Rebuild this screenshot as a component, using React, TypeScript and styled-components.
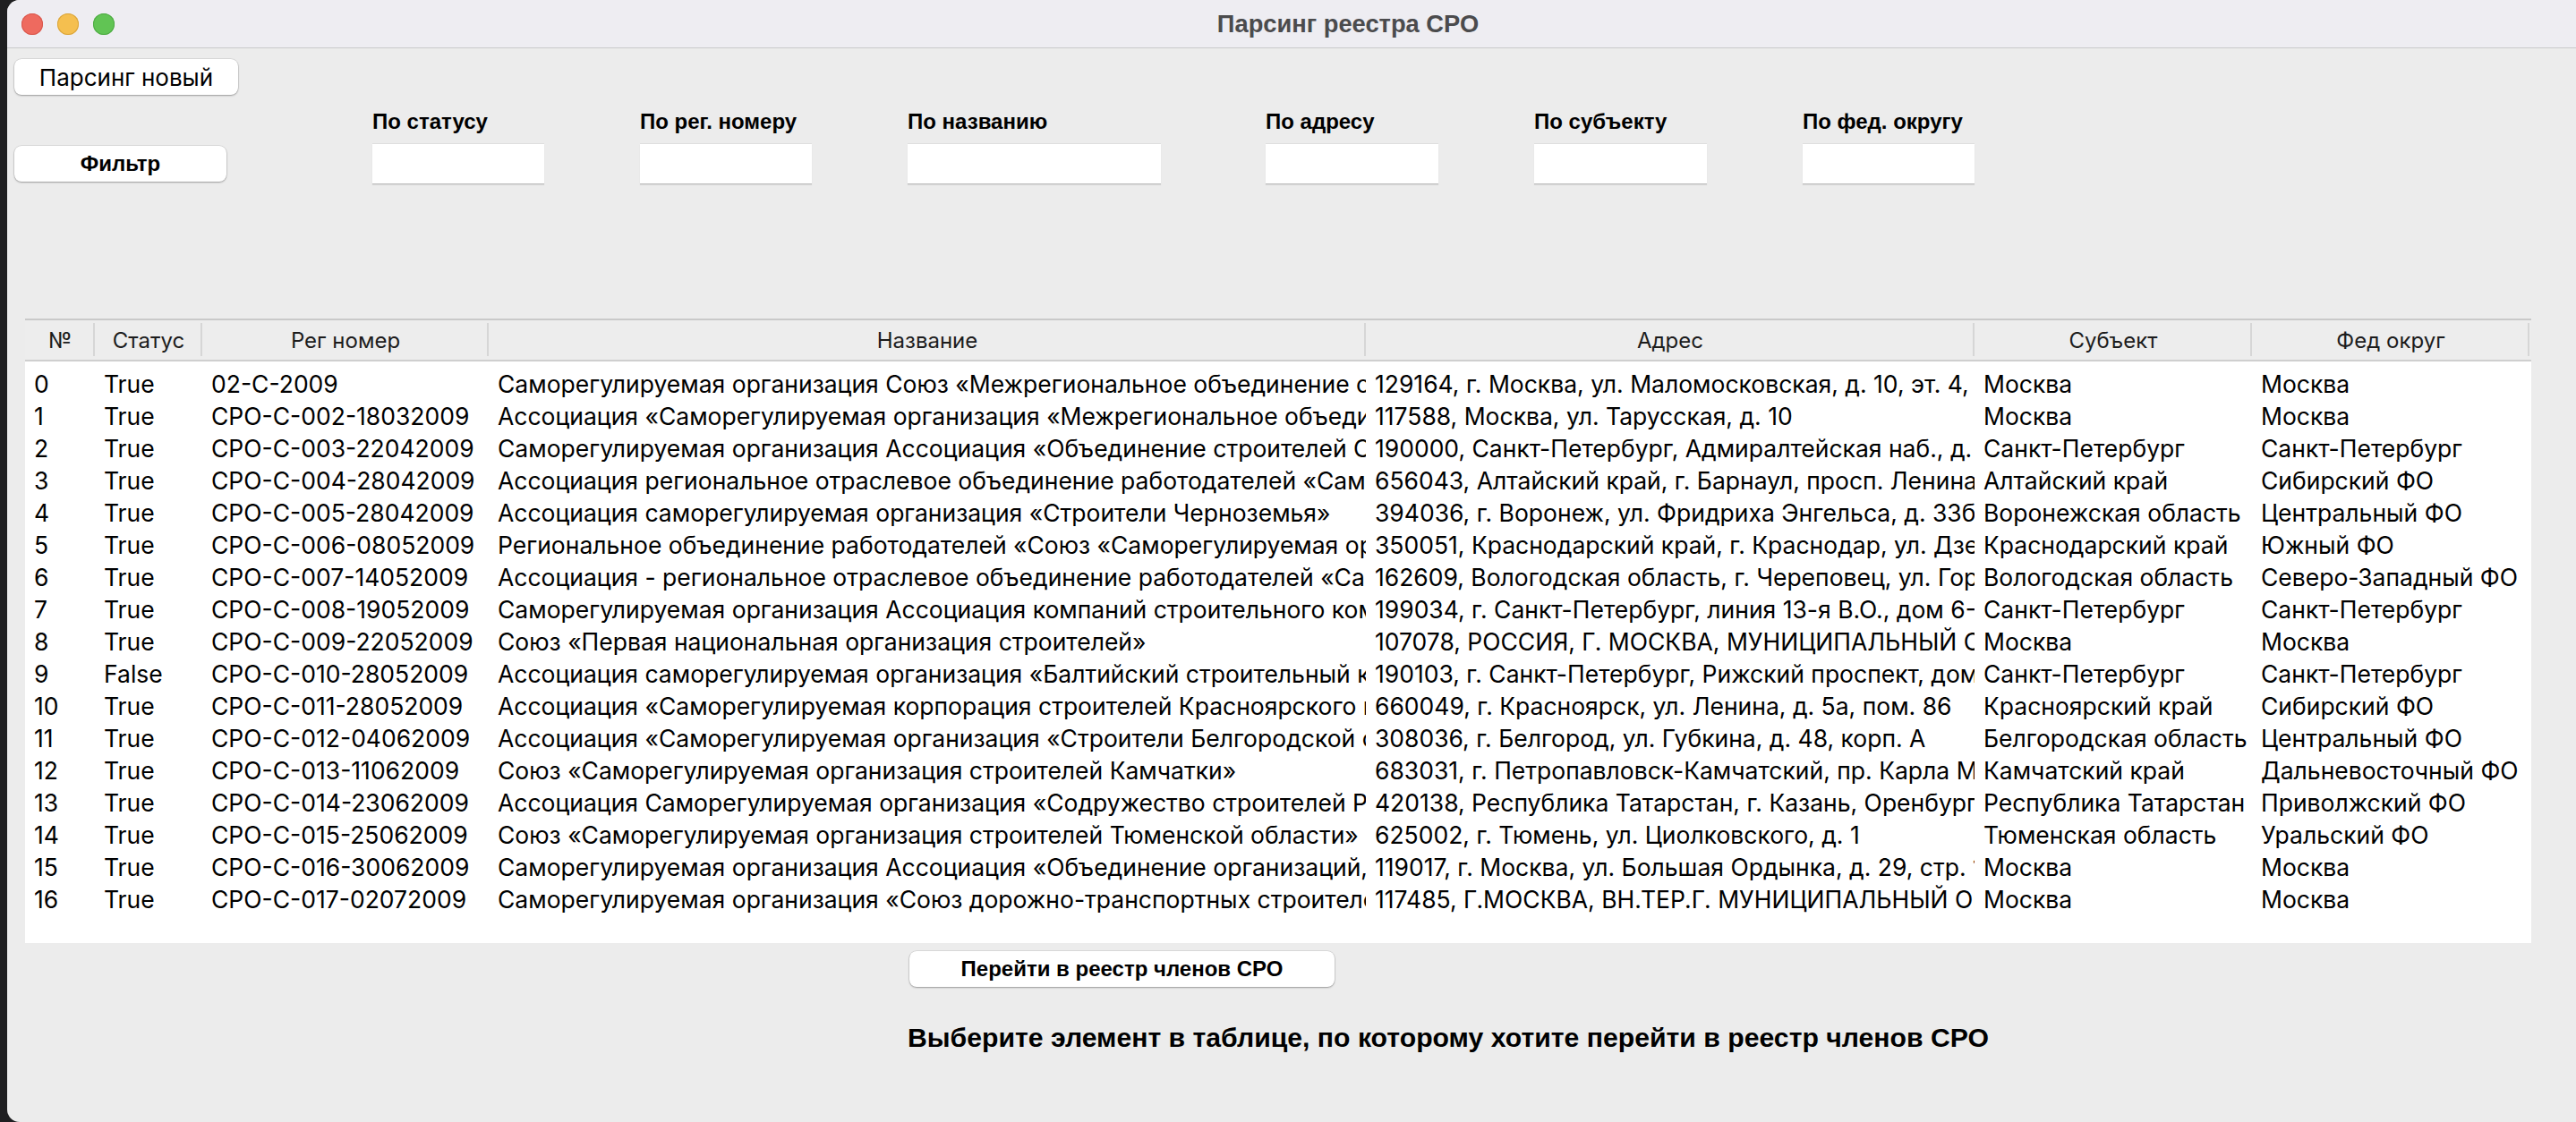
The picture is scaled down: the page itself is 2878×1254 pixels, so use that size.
import React from "react";
import styled, { createGlobalStyle } from "styled-components";

const Global = createGlobalStyle`
  html, body { margin: 0; padding: 0; background: #1f1f21; }
  #root { width: 2878px; height: 1254px; overflow: hidden; }
  * { box-sizing: border-box; }
`;

const Window = styled.div`
  margin-left: 8px;
  height: 1254px;
  background: #ececec;
  border-top-left-radius: 14px;
  border-bottom-left-radius: 14px;
  overflow: hidden;
  display: flex;
  flex-direction: column;
  font-family: Inter, "Noto Sans", sans-serif;
  color: #000;
`;

const TitleBar = styled.div`
  height: 54px;
  flex: none;
  background: #eeedf2;
  border-bottom: 1px solid #c9c9cb;
  display: grid;
  grid-template-columns: auto 1fr;
  align-items: center;
  padding-left: 16px;
`;

const Lights = styled.div`
  display: flex;
  gap: 16px;
`;

const Light = styled.span<{ $c: string; $b: string }>`
  width: 24px;
  height: 24px;
  border-radius: 50%;
  background: ${(p) => p.$c};
  box-shadow: inset 0 0 0 1px ${(p) => p.$b};
`;

const Title = styled.div`
  text-align: center;
  padding-left: 6px;
  font-family: "Liberation Sans", Arial, sans-serif;
  font-weight: 700;
  font-size: 27.3px;
  color: #4b4b4d;
`;

const Content = styled.div`
  flex: 1;
  display: flex;
  flex-direction: column;
  align-items: flex-start;
  padding: 12px 0 0 8px;
`;

const Button = styled.button<{ $w: number; $bold?: boolean }>`
  width: ${(p) => p.$w}px;
  height: 40px;
  flex: none;
  background: #fff;
  border: none;
  border-radius: 8px;
  box-shadow: 0 0 0 0.5px rgba(0, 0, 0, 0.14), 0 1px 2px rgba(0, 0, 0, 0.3);
  font-family: ${(p) => (p.$bold ? '"Liberation Sans", Arial, sans-serif' : 'Inter, "Noto Sans", sans-serif')};
  font-weight: ${(p) => (p.$bold ? 700 : 400)};
  font-size: ${(p) => (p.$bold ? 24 : 26)}px;
  color: #000;
  padding: 0;
  cursor: default;
`;

const FilterRow = styled.div`
  display: flex;
  align-items: flex-end;
  gap: 107px;
  margin-top: 17px;
`;

const FilterButtonSlot = styled.div`
  margin-right: 56px;
  margin-bottom: 2px;
`;

const Field = styled.div<{ $extra?: number }>`
  display: flex;
  flex-direction: column;
  margin-right: ${(p) => p.$extra || 0}px;
`;

const FieldLabel = styled.div`
  font-family: "Liberation Sans", Arial, sans-serif;
  font-weight: 700;
  font-size: 24px;
  line-height: 26px;
  margin-bottom: 11px;
  white-space: nowrap;
`;

const Input = styled.div<{ $w: number }>`
  width: ${(p) => p.$w}px;
  height: 45px;
  background: #fff;
  border-top: 1px solid #dedede;
  box-shadow: 0 1px 0 #bdbdbd, 0 2px 1px rgba(0, 0, 0, 0.08);
`;

const Table = styled.div`
  margin-top: 151px;
  margin-left: 12px;
  width: 2800px;
  display: flex;
  flex-direction: column;
`;

const COLS = "78px 120px 320px 980px 680px 310px 310px 2px";

const HeaderRow = styled.div`
  display: grid;
  grid-template-columns: ${COLS};
  height: 48px;
  background: #ededed;
  border-top: 2px solid #c9c9c9;
  border-bottom: 2px solid #cfcfcf;
`;

const HeaderCell = styled.div`
  position: relative;
  display: flex;
  align-items: center;
  justify-content: center;
  font-size: 24px;
  color: #1c1c1c;
  white-space: nowrap;
  overflow: hidden;
  &::after {
    content: "";
    position: absolute;
    right: 0;
    top: 3px;
    bottom: 4px;
    width: 2px;
    background: #d6d6d6;
  }
`;

const Body = styled.div`
  background: #fff;
  padding: 7px 0 31px;
`;

const Row = styled.div`
  display: grid;
  grid-template-columns: ${COLS};
  height: 36px;
`;

const Cell = styled.div`
  padding-left: 10px;
  font-size: 26.5px;
  line-height: 36px;
  white-space: nowrap;
  overflow: hidden;
`;

const Bottom = styled.div`
  display: flex;
  flex-direction: column;
  align-items: flex-start;
  padding-left: 998px;
`;

const GoSlot = styled.div`
  margin-top: 9px;
  margin-left: 2px;
`;

const Message = styled.div`
  margin-top: 40px;
  font-family: "Liberation Sans", Arial, sans-serif;
  font-weight: 700;
  font-size: 30.2px;
  line-height: 34px;
  white-space: nowrap;
`;

const headers = ["№", "Статус", "Рег номер", "Название", "Адрес", "Субъект", "Фед округ"];

const rows: string[][] = [
  ["0", "True", "02-С-2009", "Саморегулируемая организация Союз «Межрегиональное объединение организаций железнодорожного строительства»", "129164, г. Москва, ул. Маломосковская, д. 10, эт. 4, пом. I, ком. 1", "Москва", "Москва"],
  ["1", "True", "СРО-С-002-18032009", "Ассоциация «Саморегулируемая организация «Межрегиональное объединение строителей»", "117588, Москва, ул. Тарусская, д. 10", "Москва", "Москва"],
  ["2", "True", "СРО-С-003-22042009", "Саморегулируемая организация Ассоциация «Объединение строителей Санкт-Петербурга»", "190000, Санкт-Петербург, Адмиралтейская наб., д. 10, лит. А", "Санкт-Петербург", "Санкт-Петербург"],
  ["3", "True", "СРО-С-004-28042009", "Ассоциация региональное отраслевое объединение работодателей «Саморегулируемая организация»", "656043, Алтайский край, г. Барнаул, просп. Ленина, д. 20", "Алтайский край", "Сибирский ФО"],
  ["4", "True", "СРО-С-005-28042009", "Ассоциация  саморегулируемая организация  «Строители Черноземья»", "394036, г. Воронеж, ул. Фридриха Энгельса, д. 33б", "Воронежская область", "Центральный ФО"],
  ["5", "True", "СРО-С-006-08052009", "Региональное объединение работодателей «Союз «Саморегулируемая организация строителей Кубани»", "350051, Краснодарский край, г. Краснодар, ул. Дзержинского, д. 8", "Краснодарский край", "Южный ФО"],
  ["6", "True", "СРО-С-007-14052009", "Ассоциация - региональное отраслевое объединение работодателей «Саморегулируемая организация»", "162609, Вологодская область, г. Череповец, ул. Горького, д. 22", "Вологодская область", "Северо-Западный ФО"],
  ["7", "True", "СРО-С-008-19052009", "Саморегулируемая организация Ассоциация компаний строительного комплекса", "199034, г. Санкт-Петербург, линия 13-я В.О., дом 6-8, лит. А", "Санкт-Петербург", "Санкт-Петербург"],
  ["8", "True", "СРО-С-009-22052009", "Союз «Первая национальная организация строителей»", "107078, РОССИЯ, Г. МОСКВА, МУНИЦИПАЛЬНЫЙ ОКРУГ КРАСНОСЕЛЬСКИЙ", "Москва", "Москва"],
  ["9", "False", "СРО-С-010-28052009", "Ассоциация саморегулируемая организация «Балтийский строительный комплекс»", "190103, г. Санкт-Петербург, Рижский проспект, дом 3, лит. Б", "Санкт-Петербург", "Санкт-Петербург"],
  ["10", "True", "СРО-С-011-28052009", "Ассоциация «Саморегулируемая корпорация строителей Красноярского края»", "660049, г. Красноярск, ул. Ленина, д. 5а, пом. 86", "Красноярский край", "Сибирский ФО"],
  ["11", "True", "СРО-С-012-04062009", "Ассоциация «Саморегулируемая организация «Строители Белгородской области»", "308036, г. Белгород, ул. Губкина, д. 48, корп. А", "Белгородская область", "Центральный ФО"],
  ["12", "True", "СРО-С-013-11062009", "Союз «Саморегулируемая организация строителей Камчатки»", "683031, г. Петропавловск-Камчатский, пр. Карла Маркса, д. 29", "Камчатский край", "Дальневосточный ФО"],
  ["13", "True", "СРО-С-014-23062009", "Ассоциация Саморегулируемая организация «Содружество строителей Республики Татарстан»", "420138, Республика Татарстан, г. Казань, Оренбургский тракт, д. 20", "Республика Татарстан", "Приволжский ФО"],
  ["14", "True", "СРО-С-015-25062009", "Союз «Саморегулируемая организация строителей Тюменской области»", "625002, г. Тюмень, ул. Циолковского, д. 1", "Тюменская область", "Уральский ФО"],
  ["15", "True", "СРО-С-016-30062009", "Саморегулируемая организация Ассоциация «Объединение организаций, выполняющих строительство»", "119017, г. Москва, ул. Большая Ордынка, д. 29, стр. 1", "Москва", "Москва"],
  ["16", "True", "СРО-С-017-02072009", "Саморегулируемая организация «Союз дорожно-транспортных строителей «СОЮЗДОРСТРОЙ»", "117485, Г.МОСКВА, ВН.ТЕР.Г. МУНИЦИПАЛЬНЫЙ ОКРУГ ТЕПЛЫЙ СТАН", "Москва", "Москва"],
];

const filters: { label: string; w: number; extra?: number }[] = [
  { label: "По статусу", w: 192 },
  { label: "По рег. номеру", w: 192 },
  { label: "По названию", w: 283, extra: 10 },
  { label: "По адресу", w: 193 },
  { label: "По субъекту", w: 193 },
  { label: "По фед. округу", w: 192 },
];

export default function App() {
  return (
    <>
      <Global />
      <Window>
        <TitleBar>
          <Lights>
            <Light $c="#ee6a5f" $b="#d8574d" />
            <Light $c="#f5bf4f" $b="#d9a43b" />
            <Light $c="#61c454" $b="#4ea944" />
          </Lights>
          <Title>Парсинг реестра СРО</Title>
        </TitleBar>
        <Content>
          <Button $w={250}>Парсинг новый</Button>
          <FilterRow>
            <FilterButtonSlot>
              <Button $w={237} $bold>
                Фильтр
              </Button>
            </FilterButtonSlot>
            {filters.map((f) => (
              <Field key={f.label} $extra={f.extra}>
                <FieldLabel>{f.label}</FieldLabel>
                <Input $w={f.w} />
              </Field>
            ))}
          </FilterRow>
          <Table>
            <HeaderRow>
              {headers.map((h) => (
                <HeaderCell key={h}>{h}</HeaderCell>
              ))}
              <div />
            </HeaderRow>
            <Body>
              {rows.map((r) => (
                <Row key={r[0]}>
                  {r.map((c, i) => (
                    <Cell key={i}>{c}</Cell>
                  ))}
                  <div />
                </Row>
              ))}
            </Body>
          </Table>
          <Bottom>
            <GoSlot>
              <Button $w={475} $bold>
                Перейти в реестр членов СРО
              </Button>
            </GoSlot>
            <Message>Выберите элемент в таблице, по которому хотите перейти в реестр членов СРО</Message>
          </Bottom>
        </Content>
      </Window>
    </>
  );
}
